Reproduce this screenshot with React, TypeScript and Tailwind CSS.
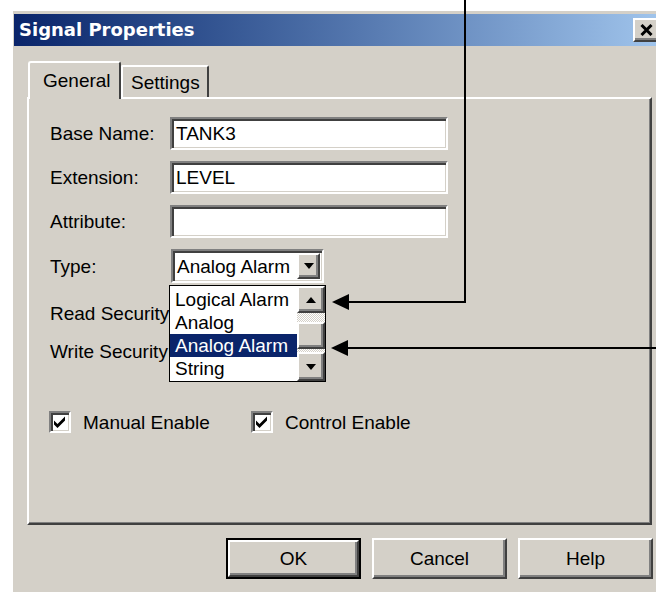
import React from "react";

const raised =
  "border-2 border-t-white border-l-white border-r-[#404040] border-b-[#404040] shadow-[inset_-2px_-2px_0_#808080]";
const sunken =
  "border-2 border-t-[#808080] border-l-[#808080] border-r-white border-b-white shadow-[inset_2px_2px_0_#404040,inset_-1px_-1px_0_#d4d0c8] bg-white";
const dither =
  "bg-[image:repeating-conic-gradient(#ffffff_0_25%,#d4d0c8_0_50%)] bg-[length:2px_2px]";

const Triangle = ({ up }: { up?: boolean }) => (
  <svg width="10" height="6" viewBox="0 0 10 6">
    <polygon points={up ? "5,0 10,6 0,6" : "0,0 10,0 5,6"} fill="#000" />
  </svg>
);

const Check = () => (
  <svg width="13" height="12" viewBox="0 0 13 12">
    <polygon points="0,4.5 3.5,8 11,0.5 11,4.5 3.5,12 0,8.5" fill="#000" />
  </svg>
);

const TextField = ({ value }: { value: string }) => (
  <div className={`${sunken} w-[278px] h-[33px] flex items-center pl-[4px]`}>{value}</div>
);

const Row = (props: { label: string; className?: string; children?: React.ReactNode }) => (
  <div className={`flex items-center h-[33px] ${props.className ?? ""}`}>
    <span className="w-[120px] whitespace-nowrap">{props.label}</span>
    {props.children}
  </div>
);

const CheckBox = ({ label }: { label: string }) => (
  <div className="flex items-center">
    <div className={`${sunken} w-[22px] h-[22px] flex items-center justify-center`}>
      <Check />
    </div>
    <span className="ml-[12px]">{label}</span>
  </div>
);

const types = ["Logical Alarm", "Analog", "Analog Alarm", "String"];

const TypeCombo = () => (
  <div className={`${sunken} relative ml-[1px] w-[153px] h-[34px] flex items-center`}>
    <span className="flex-1 pl-[4px]">Analog Alarm</span>
    <div className={`${raised} w-[23px] h-[26px] mr-[2px] bg-[#d4d0c8] flex items-center justify-center`}>
      <Triangle />
    </div>

    {/* open drop-down list */}
    <div className="absolute left-[-4px] top-[34px] z-20 w-[157px] h-[97px] border border-black bg-white flex">
      <div className="w-[127px] pt-[2px]">
        {types.map((t) => (
          <div
            key={t}
            className={`h-[23px] flex items-center pl-[5px] ${
              t === "Analog Alarm" ? "bg-[#0a246a] text-white" : ""
            }`}
          >
            {t}
          </div>
        ))}
      </div>
      <div className="w-[28px] flex flex-col">
        <div className={`${raised} h-[27px] bg-[#d4d0c8] flex items-center justify-center`}>
          <Triangle up />
        </div>
        <div className={`h-[9px] ${dither}`} />
        <div className={`${raised} h-[27px] bg-[#d4d0c8]`} />
        <div className={`h-[3px] ${dither}`} />
        <div className={`${raised} flex-1 bg-[#d4d0c8] flex items-center justify-center`}>
          <Triangle />
        </div>
      </div>
    </div>
  </div>
);

const DialogButton = ({ label, isDefault }: { label: string; isDefault?: boolean }) =>
  isDefault ? (
    <div className="w-[135px] h-[41px] border-2 border-black">
      <div className={`${raised} w-full h-full flex items-center justify-center`}>{label}</div>
    </div>
  ) : (
    <div className={`${raised} w-[135px] h-[41px] flex items-center justify-center`}>{label}</div>
  );

export default function App() {
  return (
    <div className="relative w-[656px] h-[592px] overflow-hidden bg-white pl-[11px] pt-[9px] text-[19px] leading-none text-black font-['Liberation_Sans',Arial,sans-serif]">
      <div className="w-[670px] h-[600px] bg-[#d4d0c8] shadow-[inset_2px_2px_0_#ffffff] pl-[3px] pt-[5px]">
        {/* title bar */}
        <div className="h-[32px] flex items-center bg-linear-to-r from-[#0a246a] to-[#a6caf0] pl-[5px]">
          <span className="flex-1 text-white font-bold text-[18px] font-['DejaVu_Sans',sans-serif]">
            Signal Properties
          </span>
          <div className={`${raised} w-[27px] h-[24px] mr-[21px] bg-[#d4d0c8] flex items-center pl-[5px]`}>
            <svg width="13" height="12" viewBox="0 0 13 12">
              <path d="M1.5 1 L11.5 11 M11.5 1 L1.5 11" stroke="#000" strokeWidth="3" />
            </svg>
          </div>
        </div>

        {/* tabs */}
        <div className="flex items-end h-[36px] ml-[14px] mt-[15px]">
          <div className="relative z-10 -mb-[2px] h-[38px] w-[93px] bg-[#d4d0c8] border-t-2 border-l-2 border-r-2 border-t-white border-l-white border-r-[#404040] rounded-t-[3px] pl-[13px] pb-[2px] flex items-center">
            General
          </div>
          <div className="h-[32px] w-[88px] border-t-2 border-l-2 border-r-2 border-t-white border-l-white border-r-[#404040] rounded-t-[2px] pl-[8px] flex items-center">
            Settings
          </div>
        </div>

        {/* General page */}
        <div className="ml-[13px] w-[625px] h-[428px] border-2 border-t-white border-l-white border-r-[#404040] border-b-[#404040] shadow-[inset_-1px_-1px_0_#808080] pl-[21px] pt-[18px]">
          <Row label="Base Name:">
            <TextField value="TANK3" />
          </Row>
          <Row label="Extension:" className="mt-[11px]">
            <TextField value="LEVEL" />
          </Row>
          <Row label="Attribute:" className="mt-[11px]">
            <TextField value="" />
          </Row>
          <div className="flex items-center h-[34px] mt-[11px]">
            <span className="w-[120px]">Type:</span>
            <TypeCombo />
          </div>
          <Row label="Read Security:" className="mt-[14px]" />
          <Row label="Write Security:" className="mt-[5px]" />

          <div className="flex items-center h-[22px] mt-[43px] -ml-[1px]">
            <div className="w-[202px]">
              <CheckBox label="Manual Enable" />
            </div>
            <CheckBox label="Control Enable" />
          </div>
        </div>

        {/* buttons */}
        <div className="flex gap-[11px] ml-[212px] mt-[13px]">
          <DialogButton label="OK" isDefault />
          <DialogButton label="Cancel" />
          <DialogButton label="Help" />
        </div>
      </div>

      {/* callout arrows */}
      <svg className="absolute inset-0 z-50 pointer-events-none" width="656" height="592" viewBox="0 0 656 592">
        <path d="M465 0 V302 H346" fill="none" stroke="#000" strokeWidth="2" />
        <polygon points="332,302 349,294 349,310" fill="#000" />
        <path d="M656 348 H345" fill="none" stroke="#000" strokeWidth="2" />
        <polygon points="331,348 348,340 348,356" fill="#000" />
      </svg>
    </div>
  );
}
